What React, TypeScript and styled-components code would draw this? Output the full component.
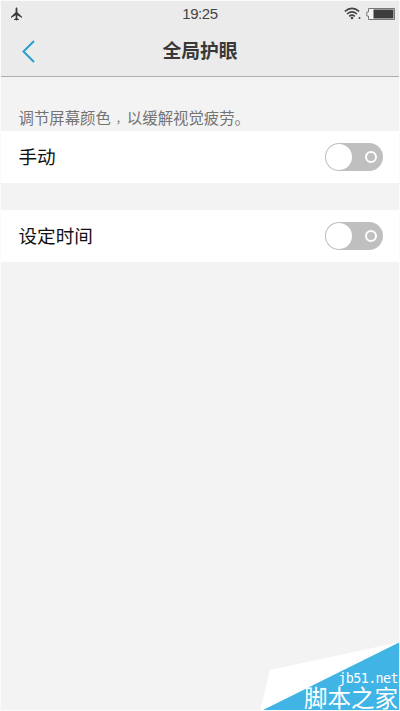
import React from "react";
import styled, { createGlobalStyle } from "styled-components";

const GlobalStyle = createGlobalStyle`
  * { box-sizing: border-box; }
  body { margin: 0; background: #fff; }
`;

const Screen = styled.main`
  position: relative;
  display: flex;
  flex-direction: column;
  width: 400px;
  height: 711px;
  overflow: hidden;
  background: #f3f3f3;
  border: 1px solid #fbfbfb;
  font-family: "Liberation Sans", "Noto Sans CJK SC", sans-serif;
`;

const Header = styled.header`
  height: 76px;
  flex: none;
  background: #ebebeb;
  border-bottom: 1px solid #aeb0ae;
`;

const StatusBar = styled.div`
  display: grid;
  grid-template-columns: 1fr auto 1fr;
  align-items: center;
  height: 25px;
  padding: 0 4px;
`;

const AirplaneIcon = styled.svg`
  margin-left: 5px;
`;

const Clock = styled.time`
  font-size: 15px;
  line-height: 25px;
  letter-spacing: -0.4px;
  color: #444;
`;

const StatusIcons = styled.div`
  display: flex;
  justify-content: flex-end;
  align-items: center;
  gap: 4px;
`;

const TitleBar = styled.div`
  display: grid;
  grid-template-columns: 60px 1fr 60px;
  align-items: center;
  height: 50px;
`;

const BackButton = styled.button`
  display: flex;
  height: 50px;
  padding: 12px 0 0 20px;
  border: 0;
  background: none;
`;

const Title = styled.h1`
  margin: 0;
  font-size: 18.8px;
  line-height: 52px;
  font-weight: 700;
  text-align: center;
  color: #383838;
`;

const Hint = styled.p`
  display: flex;
  height: 54px;
  flex: none;
  margin: 0;
  padding: 31px 0 0 17.5px;
  font-size: 15.4px;
  line-height: 22px;
  white-space: nowrap;
  color: #747474;
`;

const Comma = styled.span`
  width: 16px;
  padding-left: 5px;
  font-size: 11px;
`;

const Row = styled.section`
  display: flex;
  flex: none;
  justify-content: space-between;
  align-items: center;
  height: 52px;
  margin-bottom: 27px;
  padding: 0 16px 0 17.5px;
  background: #fff;
`;

const RowLabel = styled.span`
  padding-top: 2px;
  font-size: 18.6px;
  line-height: 28px;
  color: #111;
`;

const Track = styled.button<{ $on: boolean }>`
  display: flex;
  flex-direction: ${(p) => (p.$on ? "row-reverse" : "row")};
  align-items: center;
  justify-content: space-between;
  width: 58px;
  height: 28px;
  padding: 0 6px 0 1px;
  border: 0;
  border-radius: 14px;
  background: #bfbfbf;
`;

const Knob = styled.span`
  width: 26px;
  height: 26px;
  border-radius: 50%;
  background: #fff;
`;

const OffMark = styled.span`
  width: 12px;
  height: 12px;
  border: 2px solid #fff;
  border-radius: 50%;
`;

const Watermark = styled.div`
  position: absolute;
  right: -1px;
  bottom: -1px;
  width: 140px;
  height: 69px;
  color: #fff;
`;

const WatermarkShape = styled.svg`
  position: absolute;
  inset: 0;
`;

const WatermarkText = styled.div`
  position: relative;
  display: flex;
  flex-direction: column;
  align-items: flex-end;
  padding: 28px 2px 0 0;
`;

const SiteUrl = styled.span`
  height: 16px;
  font-family: "DejaVu Sans Mono", monospace;
  font-size: 13.4px;
  letter-spacing: -0.6px;
  line-height: 18px;
`;

const SiteName = styled.span`
  font-size: 23.5px;
  line-height: 26px;
  white-space: nowrap;
`;

function Toggle({ label, on = false }: { label: string; on?: boolean }) {
  return (
    <Track type="button" role="switch" aria-checked={on} aria-label={label} $on={on}>
      <Knob />
      <OffMark />
    </Track>
  );
}

function SettingRow({ label }: { label: string }) {
  return (
    <Row>
      <RowLabel>{label}</RowLabel>
      <Toggle label={label} />
    </Row>
  );
}

export default function App() {
  return (
    <>
      <GlobalStyle />
      <Screen>
        <Header>
          <StatusBar>
            <AirplaneIcon width="13" height="14" viewBox="0 0 13 14" fill="#3a3a3a">
              <path d="M6.5 .5C7.1 .5 7.4 1.1 7.4 2V5.2L12 9.8V11L7.3 8.2V11.2L8.9 12.3V13H7L6.9 13.6H6.1L6 13H4.1V12.3L5.7 11.2V8.2L1 11V9.8L5.6 5.2V2C5.6 1.1 5.9 .5 6.5 .5Z" />
            </AirplaneIcon>
            <Clock>19:25</Clock>
            <StatusIcons>
              <svg width="18" height="13" viewBox="0 0 18 13" fill="none" stroke="#444" strokeWidth="1.6">
                <path d="M.8 4.4Q8 -1.8 15.2 4.4M3 7Q8 2.6 13 7M5.2 9.3Q8 6.8 10.8 9.3" />
                <circle cx="8" cy="11" r="1.3" fill="#444" stroke="none" />
                <circle cx="15.5" cy="11" r="1" fill="#444" stroke="none" />
              </svg>
              <svg width="29" height="12" viewBox="0 0 29 12">
                <path d="M2.5 .5H28.5V11.5H2.5V8H.8V4H2.5Z" fill="#f4f4f4" stroke="#777" />
                <rect x="7.5" y="1.5" width="20" height="9" fill="#3d3d3d" />
              </svg>
            </StatusIcons>
          </StatusBar>
          <TitleBar>
            <BackButton aria-label="返回">
              <svg width="15" height="24" viewBox="0 0 15 24" fill="none" stroke="#2b9fce" strokeWidth="2">
                <path d="M13 2L2.5 12.5L13 23" />
              </svg>
            </BackButton>
            <Title>全局护眼</Title>
          </TitleBar>
        </Header>
        <Hint>
          <span>调节屏幕颜色</span>
          <Comma>，</Comma>
          <span>以缓解视觉疲劳。</span>
        </Hint>
        <SettingRow label="手动" />
        <SettingRow label="设定时间" />
        <Watermark>
          <WatermarkShape width="140" height="69" viewBox="0 0 140 69">
            <path d="M0 69L10 28L140 0V69Z" fill="#fff" />
            <path d="M1 69L140 0V69Z" fill="#41b4e6" />
          </WatermarkShape>
          <WatermarkText>
            <SiteUrl>jb51.net</SiteUrl>
            <SiteName>脚本之家</SiteName>
          </WatermarkText>
        </Watermark>
      </Screen>
    </>
  );
}
